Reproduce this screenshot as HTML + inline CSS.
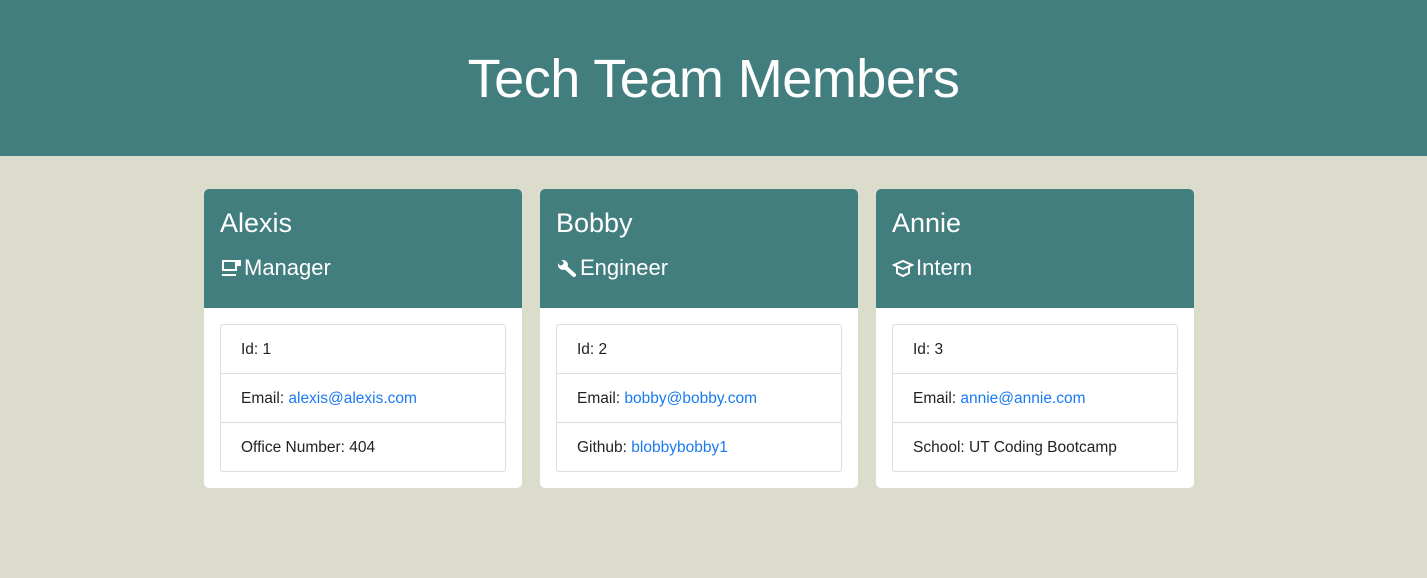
<!DOCTYPE html>
<html><head><style>
body{margin:0;background:#dcdccd;font-family:"Liberation Sans",sans-serif;width:1427px;height:578px;overflow:hidden}
.hd{background:#437e7f;height:156px;color:#fff;text-align:center}
.hd h1{margin:0;font-weight:normal;font-size:54px;line-height:158px;letter-spacing:-0.5px}
.row{position:absolute;top:189px;left:204px;display:flex;gap:18px}
.card{width:318px;height:299px;background:#fff;border-radius:5px;overflow:hidden}
.ch{background:#437e7f;height:119px;color:#fff;padding-left:16px;box-sizing:border-box}
.ch .n{font-size:27px;padding-top:18px;line-height:32px}
.ch .r{font-size:22px;margin-top:16px;display:flex;align-items:center;gap:2px}
.lst{margin:16px;border:1px solid #ddd;border-radius:3px}
.li{height:48px;line-height:50px;padding-left:20px;font-size:15.5px;color:#222;border-top:1px solid #ddd}
.li:first-child{border-top:none}
a{color:#1a7af0;text-decoration:none}
</style></head><body>
<div class="hd"><h1>Tech Team Members</h1></div>
<div class="row">
<div class="card"><div class="ch"><div class="n">Alexis</div><div class="r"><svg width="22" height="20" viewBox="0 0 22 20" fill="none" stroke="#fff" stroke-width="2"><path d="M3 3h13v9H3zM2 17h14"/><rect x="16" y="3" width="4" height="4" fill="#fff"/></svg>Manager</div></div>
<div class="lst"><div class="li">Id: 1</div><div class="li">Email: <a>alexis@alexis.com</a></div><div class="li">Office Number: 404</div></div></div>
<div class="card"><div class="ch"><div class="n">Bobby</div><div class="r"><svg width="22" height="20" viewBox="0 0 22 20"><circle cx="7" cy="7" r="5" fill="#fff"/><circle cx="5" cy="5" r="2.5" fill="#437e7f"/><path d="M8 8l10 9" stroke="#fff" stroke-width="4" stroke-linecap="round"/></svg>Engineer</div></div>
<div class="lst"><div class="li">Id: 2</div><div class="li">Email: <a>bobby@bobby.com</a></div><div class="li">Github: <a>blobbybobby1</a></div></div></div>
<div class="card"><div class="ch"><div class="n">Annie</div><div class="r"><svg width="22" height="20" viewBox="0 0 22 20" fill="none" stroke="#fff" stroke-width="2"><path d="M2 7l9-4 9 4-9 4zM5 9v6l6 3 6-3V9"/></svg>Intern</div></div>
<div class="lst"><div class="li">Id: 3</div><div class="li">Email: <a>annie@annie.com</a></div><div class="li">School: UT Coding Bootcamp</div></div></div>
</div>
</body></html>
